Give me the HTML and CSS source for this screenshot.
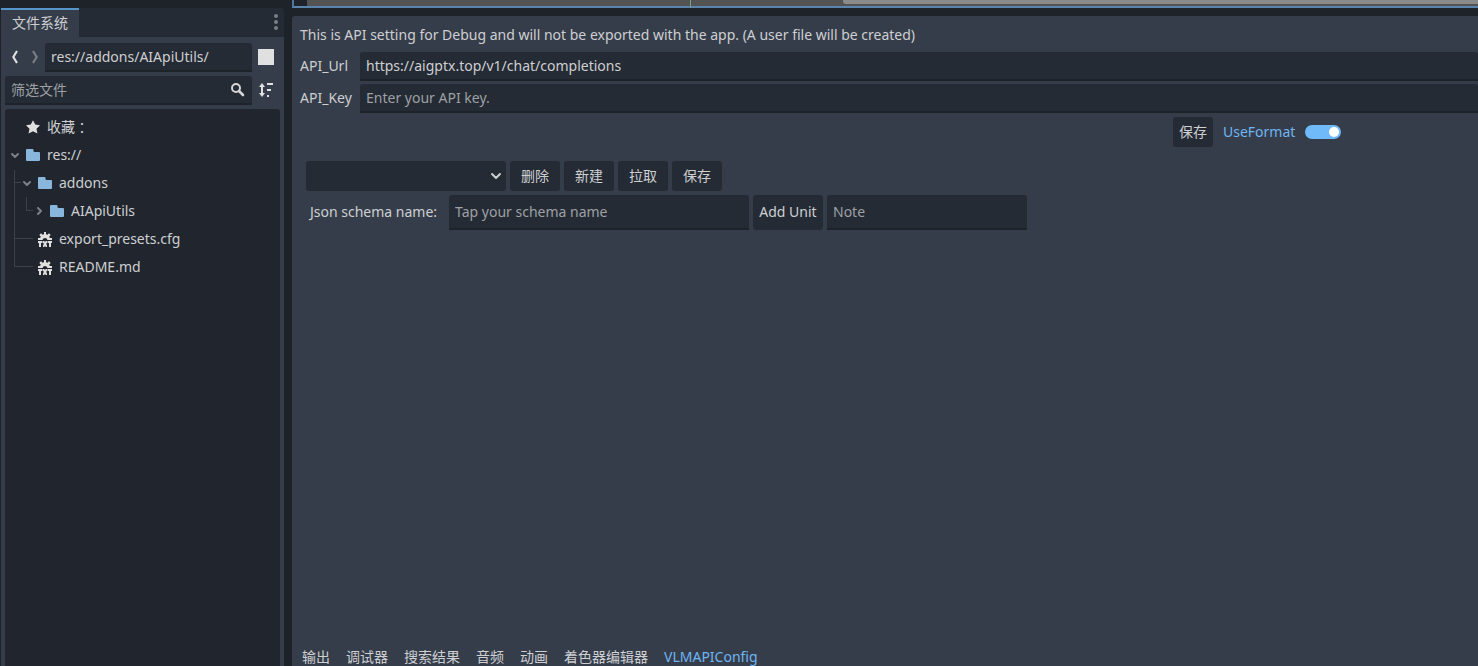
FILE: index.html
```html
<!DOCTYPE html>
<html lang="zh-CN">
<head>
<meta charset="utf-8">
<title>VLMAPIConfig</title>
<link rel="stylesheet" href="styles.css">
</head>
<body>
<svg class="defs" width="0" height="0" aria-hidden="true">
  <symbol id="folder" viewBox="0 0 16 16"><path d="M1 3a1 1 0 0 1 1-1h5.500a1 1 0 0 1 1 1v1a1 1 0 0 0 1 1H14a1 1 0 0 1 1 1v7a1 1 0 0 1-1 1H2a1 1 0 0 1-1-1z"/></symbol>
  <symbol id="down" viewBox="0 0 12 12"><path d="M3 5l3 3 3-3" fill="none" stroke="currentColor" stroke-width="2" stroke-linecap="round" stroke-linejoin="round"/></symbol>
  <symbol id="right" viewBox="0 0 12 12"><path d="M5 3l3 3-3 3" fill="none" stroke="currentColor" stroke-width="2" stroke-linecap="round" stroke-linejoin="round"/></symbol>
  <symbol id="textfile" viewBox="0 0 16 16"><path d="M7 1h2v2.200a5 5 0 0 1 1.500.6L12 2.300 13.700 4l-1.500 1.500a5 5 0 0 1 .6 1.500H15v2h-4.500a2.600 2.600 0 0 0-5 0H1V7h2.200a5 5 0 0 1 .6-1.500L2.300 4 4 2.300l1.500 1.500A5 5 0 0 1 7 3.200zM1 10h4.500v2H4v4H2v-4H1zM6 10h1.400l.6 1.500.6-1.500H10v1.500L9.200 13l.8 1.500V16H8.600L8 14.500 7.400 16H6v-1.500l.8-1.500-.8-1.500zM10.500 10H15v2h-1v4h-2v-4h-1.500z"/></symbol>
</svg>
<div class="editor">
  <aside class="dock">
    <header class="dock-head">
      <div class="dock-tab">文件系统</div>
      <svg class="dots" width="4" height="16" viewBox="0 0 4 16"><circle cx="2" cy="2" r="2"/><circle cx="2" cy="8" r="2"/><circle cx="2" cy="14" r="2"/></svg>
    </header>
    <div class="dock-body">
      <div class="path-row">
        <svg class="nav back" width="16" height="16" viewBox="0 0 16 16"><path d="M10 2L6.300 8l3.700 6"/></svg>
        <svg class="nav forward" width="16" height="16" viewBox="0 0 16 16"><path d="M6 2l3.700 6L6 14"/></svg>
        <div class="field path">res://addons/AIApiUtils/</div>
        <span class="swatch"></span>
      </div>
      <div class="filter-row">
        <div class="field filter"><span>筛选文件</span>
          <svg width="16" height="16" viewBox="0 0 16 16"><circle cx="6" cy="6" r="4" fill="none" stroke="currentColor" stroke-width="2"/><path d="M9 9l4 4" stroke="currentColor" stroke-width="2.600" stroke-linecap="round"/></svg>
        </div>
        <svg class="sort" width="16" height="16" viewBox="0 0 16 16"><path d="M4 1L1 5h2v6H1l3 4 3-4H5V5h2zM9 1h6v2H9zM9 7h4v2H9zM9 13h2v2H9z"/></svg>
      </div>
      <div class="tree">
        <svg class="guides" width="34" height="170" viewBox="0 0 34 170"><path d="M9.500 61v97M10 73.500h6M10 129.500h18M9 157.500h19M21.500 88v14M21 101.500h7"/></svg>
        <div class="item level0"><svg class="icon star" width="16" height="16" viewBox="0 0 16 16"><path d="M8 1.200l2.200 4.400 4.800.7-3.500 3.400.9 4.800L8 12.300l-4.400 2.200.9-4.800L1 6.300l4.800-.7z"/></svg><span>收藏</span><span class="colon" lang="zh-TW">：</span></div>
        <div class="item level0"><svg class="arrow"><use href="#down"/></svg><svg class="icon folder"><use href="#folder"/></svg><span>res://</span></div>
        <div class="item level1"><svg class="arrow"><use href="#down"/></svg><svg class="icon folder"><use href="#folder"/></svg><span>addons</span></div>
        <div class="item level2"><svg class="arrow"><use href="#right"/></svg><svg class="icon folder"><use href="#folder"/></svg><span>AIApiUtils</span></div>
        <div class="item level1"><svg class="icon"><use href="#textfile"/></svg><span>export_presets.cfg</span></div>
        <div class="item level1"><svg class="icon"><use href="#textfile"/></svg><span>README.md</span></div>
      </div>
    </div>
  </aside>
  <main class="workspace">
    <div class="viewport"><div class="ruler"><div class="thumb"></div><i class="marker"></i></div></div>
    <section class="panel">
      <p class="notice">This is API setting for Debug and will not be exported with the app. (A user file will be created)</p>
      <div class="api-row"><label>API_Url</label><div class="field">https://aigptx.top/v1/chat/completions</div></div>
      <div class="api-row"><label>API_Key</label><div class="field hint">Enter your API key.</div></div>
      <div class="save-row">
        <div class="button save">保存</div>
        <span class="use-format">UseFormat</span>
        <span class="toggle"></span>
      </div>
      <div class="schema-actions">
        <div class="button select"><svg width="16" height="16" viewBox="0 0 16 16"><path d="M4 6l4 4 4-4" fill="none" stroke="currentColor" stroke-width="2" stroke-linecap="round" stroke-linejoin="round"/></svg></div>
        <div class="button">删除</div><div class="button">新建</div><div class="button">拉取</div><div class="button">保存</div>
      </div>
      <div class="schema-row">
        <label>Json schema name:</label>
        <div class="field hint name">Tap your schema name</div>
        <div class="button add">Add Unit</div>
        <div class="field hint note">Note</div>
      </div>
      <nav class="bottom-tabs"><span>输出</span><span>调试器</span><span>搜索结果</span><span>音频</span><span>动画</span><span>着色器编辑器</span><span class="active">VLMAPIConfig</span></nav>
    </section>
  </main>
</div>
</body>
</html>
```
FILE: styles.css
```css
* { box-sizing: border-box; }
body {
  margin: 0;
  height: 666px;
  overflow: hidden;
  background: #1e2229;
  color: #cdcfd2;
  font: 14px/20px "Noto Sans", "Noto Sans CJK SC", sans-serif;
  white-space: nowrap;
}
svg { display: block; flex: none; fill: currentColor; }
.defs { position: absolute; }
.editor { display: flex; gap: 8px; height: 666px; padding-left: 1px; }

.dock { width: 283px; margin-top: 8px; display: flex; flex-direction: column; }
.dock-head {
  display: flex;
  justify-content: space-between;
  height: 29px;
  padding-right: 6px;
  background: #252b34;
  border-radius: 0 3px 0 0;
}
.dock-tab {
  width: 78px;
  padding: 3px 0 0 11px;
  border-top: 2px solid #5796ca;
  background: #363d4a;
}
.dots { margin-top: 6px; color: #7b7e84; }
.dock-body {
  flex: 1;
  display: flex;
  flex-direction: column;
  gap: 4px;
  padding: 6px 4px 0;
  background: #363d4a;
}
.field {
  display: flex;
  align-items: center;
  height: 29px;
  padding: 0 6px;
  background: #252b34;
  border-bottom: 2px solid #1e2229;
  border-radius: 3px 3px 0 0;
}
.path-row, .filter-row { display: flex; align-items: flex-start; }
.nav { margin-top: 6px; fill: none; stroke: #e0e0e0; stroke-width: 2.2; stroke-linejoin: round; }
.back { margin-left: 2px; }
.forward { margin-left: 4px; stroke: #7b7e84; }
.path { width: 207px; margin-left: 2px; }
.swatch { width: 16px; height: 16px; margin: 6px 0 0 6px; background: #e0e0e0; }
.filter { width: 247px; justify-content: space-between; color: #9da0a5; }
.filter svg { color: #d5d5d5; }
.sort { margin: 6px 0 0 6px; color: #e0e0e0; }
.tree {
  position: relative;
  flex: 1;
  padding-top: 4px;
  background: #21262e;
  border-radius: 3px 3px 0 0;
}
.guides { position: absolute; left: 0; top: 0; fill: none; stroke: #3d424a; }
.item { display: flex; align-items: center; height: 28px; }
.colon { font-family: "Noto Sans CJK TC", sans-serif; }
.level0 { padding-left: 20px; }
.level1 { padding-left: 32px; }
.level2 { padding-left: 44px; }
.icon { width: 16px; height: 16px; margin-right: 6px; color: #e0e0e0; }
.folder { color: #88b6dd; }
.arrow { width: 12px; height: 12px; margin-left: -16px; margin-right: 4px; color: #7c8086; }

.workspace { flex: 1; min-width: 0; display: flex; flex-direction: column; gap: 8px; }
.viewport {
  height: 8px;
  padding-left: 13px;
  border-left: 2px solid #4d769c;
  border-bottom: 2px solid #5a84ac;
}
.ruler { position: relative; height: 6px; background: #535353; padding-left: 536px; }
.thumb { height: 4px; background: #8b8b8b; border-radius: 0 0 0 3px; }
.marker { position: absolute; left: 383px; top: 0; width: 1px; height: 8px; background: #73a083; }
.panel {
  flex: 1;
  display: flex;
  flex-direction: column;
  background: #363d4a;
  border-radius: 3px 0 0 0;
}
.notice { margin: 0; padding: 9px 8px 7px; }
.api-row { display: flex; align-items: center; margin-bottom: 3px; padding-left: 8px; }
.api-row label { width: 60px; padding-bottom: 2px; }
.api-row .field { flex: 1; }
.field.hint { color: #9da0a5; }
.save-row { display: flex; align-items: center; margin: 1px 0 14px; padding-left: 881px; }
.button {
  display: flex;
  align-items: center;
  justify-content: center;
  width: 50px;
  height: 30px;
  background: #252b34;
  border-radius: 3px;
}
.button.save { width: 40px; }
.use-format { width: 82px; margin-left: 10px; color: #6eb5f2; }
.toggle {
  display: flex;
  justify-content: flex-end;
  width: 36px;
  height: 14px;
  padding: 2px;
  border-radius: 7px;
  background: #70bafa;
}
.toggle::after { content: ""; width: 10px; height: 10px; border-radius: 50%; background: #fff; }
.schema-actions, .schema-row { display: flex; gap: 4px; padding-left: 14px; }
.button.select { width: 200px; justify-content: flex-end; padding-right: 2px; }
.schema-row { margin-top: 4px; align-items: center; }
.schema-row label { width: 139px; padding: 0 0 2px 4px; }
.schema-row .field { height: 35px; }
.name { width: 300px; }
.button.add { width: 70px; height: 35px; padding-bottom: 2px; }
.note { width: 200px; }
.bottom-tabs { display: flex; gap: 16px; height: 19px; margin-top: auto; padding-left: 10px; }
.active { color: #6eb5f2; }
```
